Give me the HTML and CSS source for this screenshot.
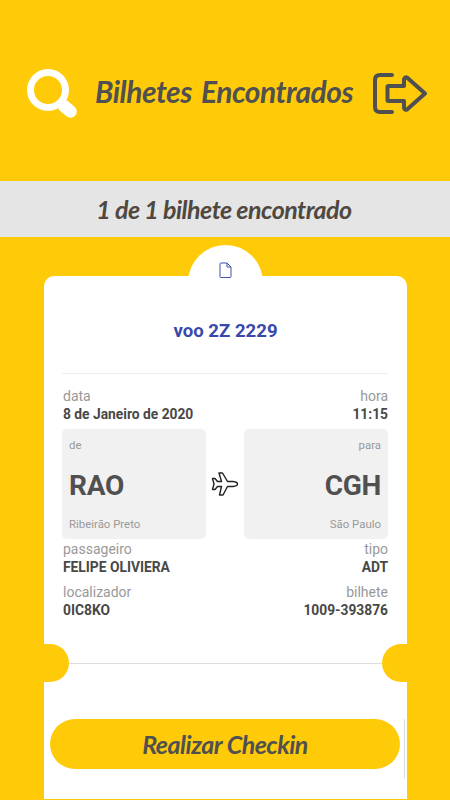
FILE: index.html
```html
<!DOCTYPE html>
<html lang="pt-BR">
<head>
    <meta charset="UTF-8">
    <title>Bilhetes Encontrados</title>
    <link rel="stylesheet" href="styles.css">
</head>
<body>
    <header class="topo">
        <svg class="icone-busca" viewBox="0 0 52 52">
            <circle cx="22" cy="22" r="17.5" fill="none" stroke="#fff" stroke-width="7"/>
            <path d="M33 33L37 37" stroke="#fff" stroke-width="9"/>
            <path d="M38 38L44.5 43.5" stroke="#fff" stroke-width="12.5" stroke-linecap="round"/>
        </svg>
        <h1><span>Bilhetes</span> <span>Encontrados</span></h1>
        <svg class="icone-sair" viewBox="0 0 56 44">
            <path d="M21 4H9Q4 4 4 9V36Q4 41 9 41H21"/>
            <path d="M17.5 15H33V8.5Q34 5.5 36 6.5L54 22.5L36 38.5Q34 39.5 33 37V30H17.5Q16.5 30 16.5 29V16Q16.5 15 17.5 15Z"/>
        </svg>
    </header>
    <div class="faixa"><span>1 de 1 bilhete encontrado</span></div>
    <main class="bilhete">
        <div class="aba">
            <svg class="icone-doc" viewBox="0 0 13 17">
                <path d="M2 1H8L12 5V14.5Q12 15.5 11 15.5H2Q1 15.5 1 14.5V2Q1 1 2 1ZM8 1V5H12"/>
            </svg>
        </div>
        <h2>voo 2Z 2229</h2>
        <div class="dados">
            <div class="linha">
                <div><label>data</label><strong>8 de Janeiro de 2020</strong></div>
                <div class="direita"><label>hora</label><strong>11:15</strong></div>
            </div>
            <div class="trecho">
                <div class="local">
                    <span>de</span>
                    <b>RAO</b>
                    <span>Ribeirão Preto</span>
                </div>
                <svg class="icone-aviao" viewBox="0 0 28 26">
                    <path d="M8 2H11.5L16.5 10.5H22Q26.5 11 26.5 13Q26.5 15 22 15.5H16.5L12 24H8.5L10.5 15.5H6.5L4 18.5H1.5L3 13L1.5 7.5H4L6.5 10.5H10.5Z"/>
                </svg>
                <div class="local direita">
                    <span>para</span>
                    <b>CGH</b>
                    <span>São Paulo</span>
                </div>
            </div>
            <div class="linha">
                <div><label>passageiro</label><strong>FELIPE OLIVIERA</strong></div>
                <div class="direita"><label>tipo</label><strong>ADT</strong></div>
            </div>
            <div class="linha ultima">
                <div><label>localizador</label><strong>0IC8KO</strong></div>
                <div class="direita"><label>bilhete</label><strong>1009-393876</strong></div>
            </div>
        </div>
        <div class="picote">
            <i class="furo"></i>
            <hr>
            <i class="furo furo-direito"></i>
        </div>
        <div class="acao">
            <button type="button"><span>Realizar</span> <span>Checkin</span></button>
        </div>
    </main>
</body>
</html>
```
FILE: styles.css
```css
* {
    box-sizing: border-box;
}
body {
    margin: 0;
    height: 800px;
    overflow: hidden;
    background-color: #ffcb08;
    color: #484848;
    font-family: Roboto, sans-serif;
}
.topo {
    display: flex;
    align-items: center;
    height: 181px;
    padding: 5px 23px 0 26px;
}
.topo h1 {
    flex: 1;
    margin: 0 0 5px 17px;
    color: #505050;
    font: italic bold 30px/36px Lato, sans-serif;
    letter-spacing: -0.5px;
    word-spacing: 3px;
    white-space: nowrap;
}
.icone-busca {
    width: 52px;
    height: 52px;
    margin-top: 2px;
}
.icone-sair {
    width: 56px;
    height: 44px;
    margin-bottom: 1px;
    fill: none;
    stroke: #505050;
    stroke-width: 4;
    stroke-linecap: round;
    stroke-linejoin: round;
}
.faixa {
    display: flex;
    align-items: center;
    justify-content: center;
    height: 56px;
    padding: 0 2px 1px 0;
    background-color: #e5e5e5;
    color: #50483f;
    font: italic bold 25px/30px Lato, sans-serif;
    letter-spacing: -0.5px;
    word-spacing: -0.3px;
}
.bilhete {
    position: relative;
    width: 363px;
    height: 523px;
    margin: 39px 0 0 44px;
    padding-top: 42px;
    border-radius: 10px 10px 0 0;
    background-color: #fff;
}
/* meia-lua acima do bilhete */
.aba {
    position: absolute;
    top: -31px;
    left: 144px;
    width: 75px;
    height: 75px;
    padding-top: 17px;
    border-radius: 50%;
    background-color: #fff;
    text-align: center;
}
.icone-doc {
    width: 13px;
    height: 17px;
    fill: none;
    stroke: #3f51b5;
}
.bilhete h2 {
    position: relative;
    margin: 0;
    color: #3949ab;
    font-size: 18.6px;
    line-height: 26px;
    text-align: center;
}
.dados {
    margin: 29px 19px 0 18px;
    padding-top: 13px;
    border-top: 1px solid #eee;
}
.linha {
    display: flex;
    justify-content: space-between;
    height: 42px;
    padding-left: 1px;
}
.linha label,
.linha strong {
    display: block;
    line-height: 18px;
}
.linha label {
    color: #999;
    font-size: 14px;
}
.linha strong {
    font-size: 13.8px;
}
.direita {
    text-align: right;
}
.trecho {
    display: flex;
    justify-content: space-between;
    align-items: center;
}
.local {
    display: flex;
    flex-direction: column;
    justify-content: space-between;
    width: 144px;
    height: 110px;
    padding: 9px 7px 8px;
    border-radius: 5px;
    background-color: #f1f1f1;
    color: #999;
    font-size: 11.4px;
    line-height: 14px;
}
.local b {
    padding-top: 3px;
    color: #505050;
    font-size: 28px;
    line-height: 32px;
    letter-spacing: -0.3px;
}
.icone-aviao {
    width: 28px;
    height: 26px;
    fill: #fff;
    stroke: #222;
    stroke-width: 1.4;
    stroke-linejoin: round;
}
.ultima {
    margin-top: 1px;
}
.trecho + .linha {
    margin-top: 1px;
}
.picote {
    display: flex;
    align-items: center;
    margin-top: 19px;
}
.picote hr {
    flex: 1;
    margin: 0;
    border: 0;
    border-top: 1px solid #ddd;
}
.furo {
    width: 25px;
    height: 38px;
    border-radius: 0 19px 19px 0;
    background-color: #ffcb08;
}
.furo-direito {
    border-radius: 19px 0 0 19px;
}
.acao {
    margin: 37px 2px 0 1px;
    padding: 0 5px;
    border-right: 1px solid #ddd;
    height: 60px;
}
.acao button {
    width: 350px;
    height: 50px;
    padding: 0 0 1px;
    border: 0;
    border-radius: 25px;
    background-color: #ffcb08;
    color: #505050;
    font: italic bold 25px/30px Lato, sans-serif;
    letter-spacing: -0.5px;
}
```
